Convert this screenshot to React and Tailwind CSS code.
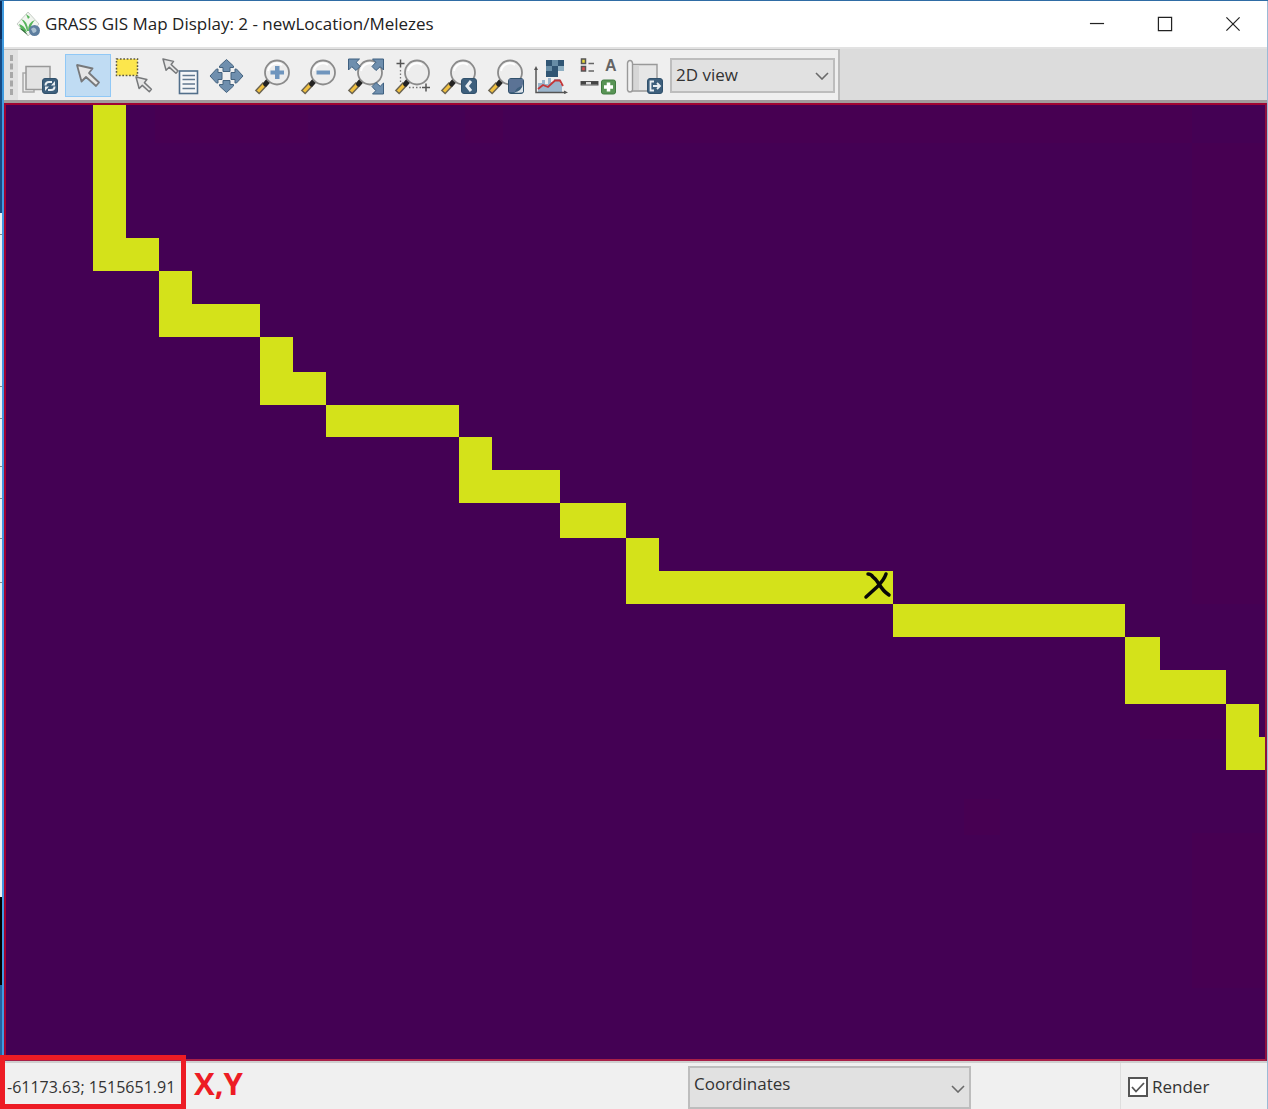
import React from "react";

const steel = "#6f8fae";
const navy = "#3d5f7c";

const Icon = ({ children }) => (
  <svg viewBox="0 0 46 44" className="h-11 w-[46px]" fill="none" aria-hidden="true">
    {children}
  </svg>
);

const Pointer = ({ x, y, s = 1 }) => (
  <path
    transform={`translate(${x} ${y}) scale(${s})`}
    d="M0 0L15.500 3.500L12 8L22 17.500L19 21L9 12L4.500 16.500Z"
    fill="#e6e6e6"
    stroke="#77797b"
    strokeWidth={1.8 / Math.sqrt(s)}
    strokeLinejoin="round"
  />
);

const Lens = ({ children }) => (
  <>
    <path d="M14 30L6 38.500" stroke="#6b6350" strokeWidth="6" />
    <path d="M13.500 30.500L7 37.500" stroke="#f0c040" strokeWidth="3.200" />
    <path d="M18 26L14.500 30" stroke="#222" strokeWidth="5" strokeLinecap="round" />
    <circle cx="26" cy="18.500" r="12" fill="#ededed" stroke="#8b8b8b" strokeWidth="1.800" />
    <path d="M17 17a9 9 0 0 1 14-6" stroke="#fff" strokeWidth="2" />
    {children}
  </>
);

const Badge = ({ children }) => (
  <g transform="translate(24 24)">
    <rect x="0.500" y="0.500" width="15" height="15" rx="2.500" fill={navy} stroke="#31516c" />
    {children}
  </g>
);

const Corner = ({ x, y, r }) => (
  <path
    transform={`translate(${x} ${y}) rotate(${r})`}
    d="M-5.500 -5.500H5.500L2.200 -2.200L6 2L2 6L-2.200 2.200L-5.500 5.500Z"
    fill={steel}
    stroke="#3f6080"
  />
);

const tools = [
  ["Render map", <>
    <path d="M8 19H5V38H16V36" stroke="#aaa" strokeWidth="1.500" />
    <rect x="8" y="12.500" width="24" height="23" fill="#e3e3e3" stroke="#999" strokeWidth="1.500" />
    <Badge><path d="M3.500 7.500Q3.500 4 7 4H10M12.500 8.500Q12.500 12 9 12H6" stroke="#e9eef2" strokeWidth="2" /><path d="M9 7.500L13 7.500V3ZM7 8.500H3V13Z" fill="#e9eef2" /></Badge>
  </>],
  ["Pointer", <Pointer x={12} y={11} />],
  ["Select features", <>
    <rect x="5.500" y="5" width="21" height="16.500" fill="#fce64c" stroke="#5d5840" strokeWidth="1.500" strokeDasharray="1.700 1.700" />
    <Pointer x={25} y={23} s={0.7} />
  </>],
  ["Query raster or vector map", <>
    <Pointer x={5} y={5} s={0.68} />
    <rect x="21.500" y="17" width="18" height="22.500" fill="#f4f6f8" stroke="#526f8b" strokeWidth="1.600" />
    <path d="M24.500 21.500H37M24.500 25.500H37M24.500 30H37M24.500 34.500H37" stroke="#61788f" strokeWidth="1.600" />
  </>],
  ["Pan", <>{[0, 90, 180, 270].map((r) => (
    <path key={r} transform={`translate(22.500 22) rotate(${r})`} d="M0 -16.500L7 -10V-8.500H3.500V-4.500H-3.500V-8.500H-7V-10Z" fill={steel} stroke="#45637f" strokeLinejoin="round" />
  ))}</>],
  ["Zoom in", <Lens><path d="M24 12H28.500V16.500H33V20.500H28.500V25H24V20.500H19.500V16.500H24Z" fill="#6f95bd" /></Lens>],
  ["Zoom out", <Lens><path d="M19.500 16.500H33V20.500H19.500Z" fill="#6f95bd" /></Lens>],
  ["Zoom to map", <>
    <Lens />
    <Corner x={10} y={10.500} r={0} /><Corner x={34} y={10.500} r={90} /><Corner x={34} y={34.500} r={180} />
  </>],
  ["Zoom to region", <>
    <Lens />
    <path d="M9.500 5.500V13.500M5.500 9.500H13.500M35 29.500V37.500M31 33.500H39" stroke="#555" strokeWidth="1.500" />
    <path d="M9.500 16V30M18 33.500H31" stroke="#777" strokeWidth="1.300" strokeDasharray="1.500 2" />
  </>],
  ["Previous zoom", <><Lens /><Badge><path d="M10 3L6 8L10 13" stroke="#e9eef2" strokeWidth="3" /></Badge></>],
  ["Zoom options", <><Lens /><Badge><path d="M1 1H15V8Q8 9 7 14H1Z" fill="#5b7395" /><path d="M15 6Q14 13 6 14.500Q14 15 15 14Z" fill="#dde3ea" /></Badge></>],
  ["Analyze map", <>
    <path d="M8 38V29H12V26H15V30H18V24H21V28H24V25H30V30H32V38Z" fill="#9bb5cc" />
    <path d="M16 6H34V16H28V23H16Z" fill="#315674" />
    <path d="M22 6H28V12H22ZM16 12H22V17H16Z" fill="#678da6" /><path d="M28 12H34V17H28Z" fill="#8eafc2" />
    <path d="M6 14V38.500H36" stroke="#555" strokeWidth="1.500" />
    <path d="M4 16L6 12L8 16ZM34 36.500L38 38.500L34 40Z" fill="#555" />
    <path d="M8 35L13 31L18 33L25 26.500H30L33 32" stroke="#c43739" strokeWidth="1.800" />
  </>],
  ["Add map elements", <>
    <rect x="4.500" y="5" width="4" height="4.500" fill="#e6d838" stroke="#555" strokeWidth="1.500" />
    <rect x="4.500" y="12.500" width="4" height="4.500" fill="#d94e4e" stroke="#555" strokeWidth="1.500" />
    <path d="M11.500 9.500H17M11.500 17H17" stroke="#666" strokeWidth="1.500" />
    <text x="28" y="16.500" fill="#646464" fontSize="16" fontWeight="700" fontFamily="Liberation Sans, sans-serif">A</text>
    <rect x="4" y="27.500" width="17" height="3.500" fill="#ddd" stroke="#555" /><path d="M4 29H9M14 29H21" stroke="#444" strokeWidth="3" />
    <rect x="24.500" y="26" width="14" height="14" rx="2" fill="#589455" stroke="#407b40" />
    <path d="M31.500 28.500V37.500M27 33H36" stroke="#fff" strokeWidth="3.500" />
  </>],
  ["Save display", <>
    <path d="M9 10.500H34V37H9Z" fill="#e6e6e6" stroke="#999" strokeWidth="1.400" />
    <path d="M10 11H16V36H10Z" fill="#d6d6d6" />
    <path d="M4.500 36V9Q5 6.500 7 6.500T9.500 9V36Q9 38 7 38T4.500 36Z" fill="#f0f0f0" stroke="#999" strokeWidth="1.400" />
    <Badge><path d="M7 3.500H3.500V12.500H7M6 8H13M10 5L13 8L10 11" stroke="#e9eef2" strokeWidth="1.800" /></Badge>
  </>],
];

const cells = [
  [93, 104, 33, 167], [126, 238, 33, 33], [159, 271, 33, 66], [192, 304, 68, 33],
  [260, 337, 33, 68], [293, 372, 33, 33], [326, 405, 133, 32], [459, 437, 33, 66],
  [492, 470, 68, 33], [560, 503, 66, 35], [626, 538, 33, 66], [659, 571, 234, 33],
  [893, 604, 232, 33], [1125, 637, 35, 67], [1160, 670, 66, 34], [1226, 704, 33, 66],
  [1259, 737, 7, 33],
];

const Chevron = ({ className }) => (
  <svg viewBox="0 0 14 8" className={className} fill="none" aria-hidden="true">
    <path d="M1 1L7 7L13 1" stroke="#6a6a6a" strokeWidth="1.600" />
  </svg>
);

function TitleBar() {
  return (
    <header className="flex h-[46px] items-center bg-white pl-3 text-[#222]">
      <svg viewBox="0 0 24 26" className="h-[26px] w-6" aria-hidden="true">
        <path d="M12 1L23 13L12 25L1 13Z" fill="#f1f5ef" stroke="#c8cfc8" />
        <path d="M3 13Q8 14 11 21Q5 20 3 13ZM11 20Q9 12 5 8Q12 10 12 20ZM12 20Q12 11 19 9Q15 13 14 20Z" fill="#55b45a" />
        <path d="M10 3L14 6L12 8Z" fill="#55b45a" />
        <path d="M3 17Q8 18 12 24L9 22Z" fill="#2f6e38" />
        <circle cx="18.500" cy="19.500" r="5.500" fill="#5d7e9f" />
        <path d="M15 18Q18 15 20 18T17 22Z" fill="#a9bfd0" />
      </svg>
      <h1 className="ml-[5px] flex-1 truncate text-[17px] leading-6 font-normal">GRASS GIS Map Display: 2 - newLocation/Melezes</h1>
      <div className="flex h-full">
        {[["Minimize", "M1 8H16"], ["Maximize", "M1.500 1.500H15.500V15.500H1.500Z"], ["Close", "M1.500 1.500L15.500 15.500M15.500 1.500L1.500 15.500"]].map(([name, d]) => (
          <button key={name} aria-label={name} className="flex w-[68px] items-center justify-center">
            <svg viewBox="0 0 17 17" className="size-4" fill="none"><path d={d} stroke="#222" strokeWidth="1.300" /></svg>
          </button>
        ))}
      </div>
    </header>
  );
}

function Toolbar() {
  return (
    <div className="flex h-14 border-t-2 border-b-3 border-t-[#e2e2e2] border-b-[#a19c9c] bg-[#dcdcdc]">
      <div className="flex items-center border-t border-r-2 border-[#bcbcbc] bg-[#efefef] pr-[3px]">
        <div className="flex h-full w-3.5 items-center justify-center bg-[#e1e1e1]">
          <div className="h-10 border-l-3 border-dashed border-[#a8a8a8]" />
        </div>
        <div className="grid w-[652px] grid-cols-14">
          {tools.map(([name, icon], i) => (
            <button
              key={name}
              aria-label={name}
              title={name}
              className={i === 1 ? "flex h-[43px] bg-[#c0dcf3] outline -outline-offset-1 outline-[#90c8f6]" : "flex h-[43px]"}
            >
              <Icon>{icon}</Icon>
            </button>
          ))}
        </div>
        <div className="relative">
          <select aria-label="View mode" className="h-[35px] w-[165px] appearance-none border-2 border-[#bdbdbd] bg-[#e1e1e1] pl-1 text-[17px] text-[#333]">
            <option>2D view</option>
          </select>
          <Chevron className="pointer-events-none absolute top-[14px] right-1.5 h-2 w-3.5" />
        </div>
      </div>
    </div>
  );
}

function MapCanvas() {
  return (
    <main className="relative min-h-80 flex-1 border-2 border-t-[#a00432] border-r-[#8c1240] border-b-[#a82048] border-l-[#a00432] bg-[#440154]">
      <svg viewBox="6 105 1259 954" preserveAspectRatio="none" shapeRendering="crispEdges" className="absolute inset-0 size-full" role="img" aria-label="Raster map">
        <path d="M155 105H308V143H155ZM465 105H503V143H465ZM580 105H1192V143H580ZM1192 143H1266V604H1192ZM1192 833H1266V988H1192ZM964 799H1000V835H964ZM1140 704H1225V739H1140Z" fill="#470052" />
        {cells.map(([x, y, w, h]) => <rect key={`${x}-${y}`} x={x} y={y} width={w} height={h} fill="#d4e21a" />)}
        <path shapeRendering="auto" d="M868 574Q871 574 873 577Q876 579 879 584Q883 591 889 595M886 574Q884 580 877 587L866 597" fill="none" stroke="#080808" strokeWidth="3.500" strokeLinecap="round" strokeLinejoin="round" />
      </svg>
    </main>
  );
}

function StatusBar() {
  return (
    <footer className="relative flex h-12 border-t-2 border-[#cfcfcf] bg-[#f0f0f0] text-[#333]">
      <div className="absolute -top-2 -left-1 h-[54px] w-[186px] border-5 border-[#ed1c24]" />
      <output className="w-[190px] shrink-0 pt-3 pl-[3px] text-[16px] leading-6">-61173.63; 1515651.91</output>
      <strong className="flex-1 text-[31px] leading-10 font-bold text-[#ed1c24]">X,Y</strong>
      <div className="relative mt-[3px] w-[283px]">
        <select aria-label="Status bar item" className="h-[43px] w-full appearance-none border-2 border-[#bdbdbd] bg-[#e1e1e1] pb-2 pl-1 text-[17px]">
          <option>Coordinates</option>
        </select>
        <Chevron className="pointer-events-none absolute top-[19px] right-1.5 h-2 w-3.5" />
      </div>
      <div className="ml-[149px] w-[147px] border-l border-[#dedede] pt-3 pl-[7px]">
        <label className="flex items-center gap-1 text-[17px] leading-6">
          <span className="relative flex size-5">
            <input type="checkbox" defaultChecked className="peer size-5 appearance-none border-2 border-[#555] bg-white" />
            <svg viewBox="0 0 20 20" className="pointer-events-none absolute inset-0 hidden size-5 peer-checked:block" fill="none"><path d="M4 10L8 14.500L16 6" stroke="#555" strokeWidth="1.800" /></svg>
          </span>
          Render
        </label>
      </div>
    </footer>
  );
}

export default function App() {
  return (
    <div className="flex h-screen min-h-[480px] overflow-hidden border-t border-[#2f6ca5] font-['Open_Sans','Noto_Sans',sans-serif]">
      <div className="flex w-0.5 flex-col" aria-hidden="true">
        <div className="h-[38px] bg-[#0c2f5f]" />
        <div className="h-[174px] bg-[#174b85]" />
        <div className="flex flex-1 flex-col divide-y divide-[#8a8a8a] bg-[#eef0f2]">
          <div className="h-[22px]" />
          <div className="h-[152px]" />
          <div className="h-8" />
          <div className="h-12" />
          <div className="h-8" />
          <div className="h-10" />
          <div className="h-11" />
          <div className="flex-1" />
        </div>
        <div className="h-[88px] bg-black" />
        <div className="h-[124px] bg-[#2461a0]" />
      </div>
      <div className="flex min-w-0 flex-1 flex-col border-r border-l-2 border-r-[#9abbd6] border-l-[#409be0]">
        <TitleBar />
        <Toolbar />
        <MapCanvas />
        <StatusBar />
      </div>
    </div>
  );
}
